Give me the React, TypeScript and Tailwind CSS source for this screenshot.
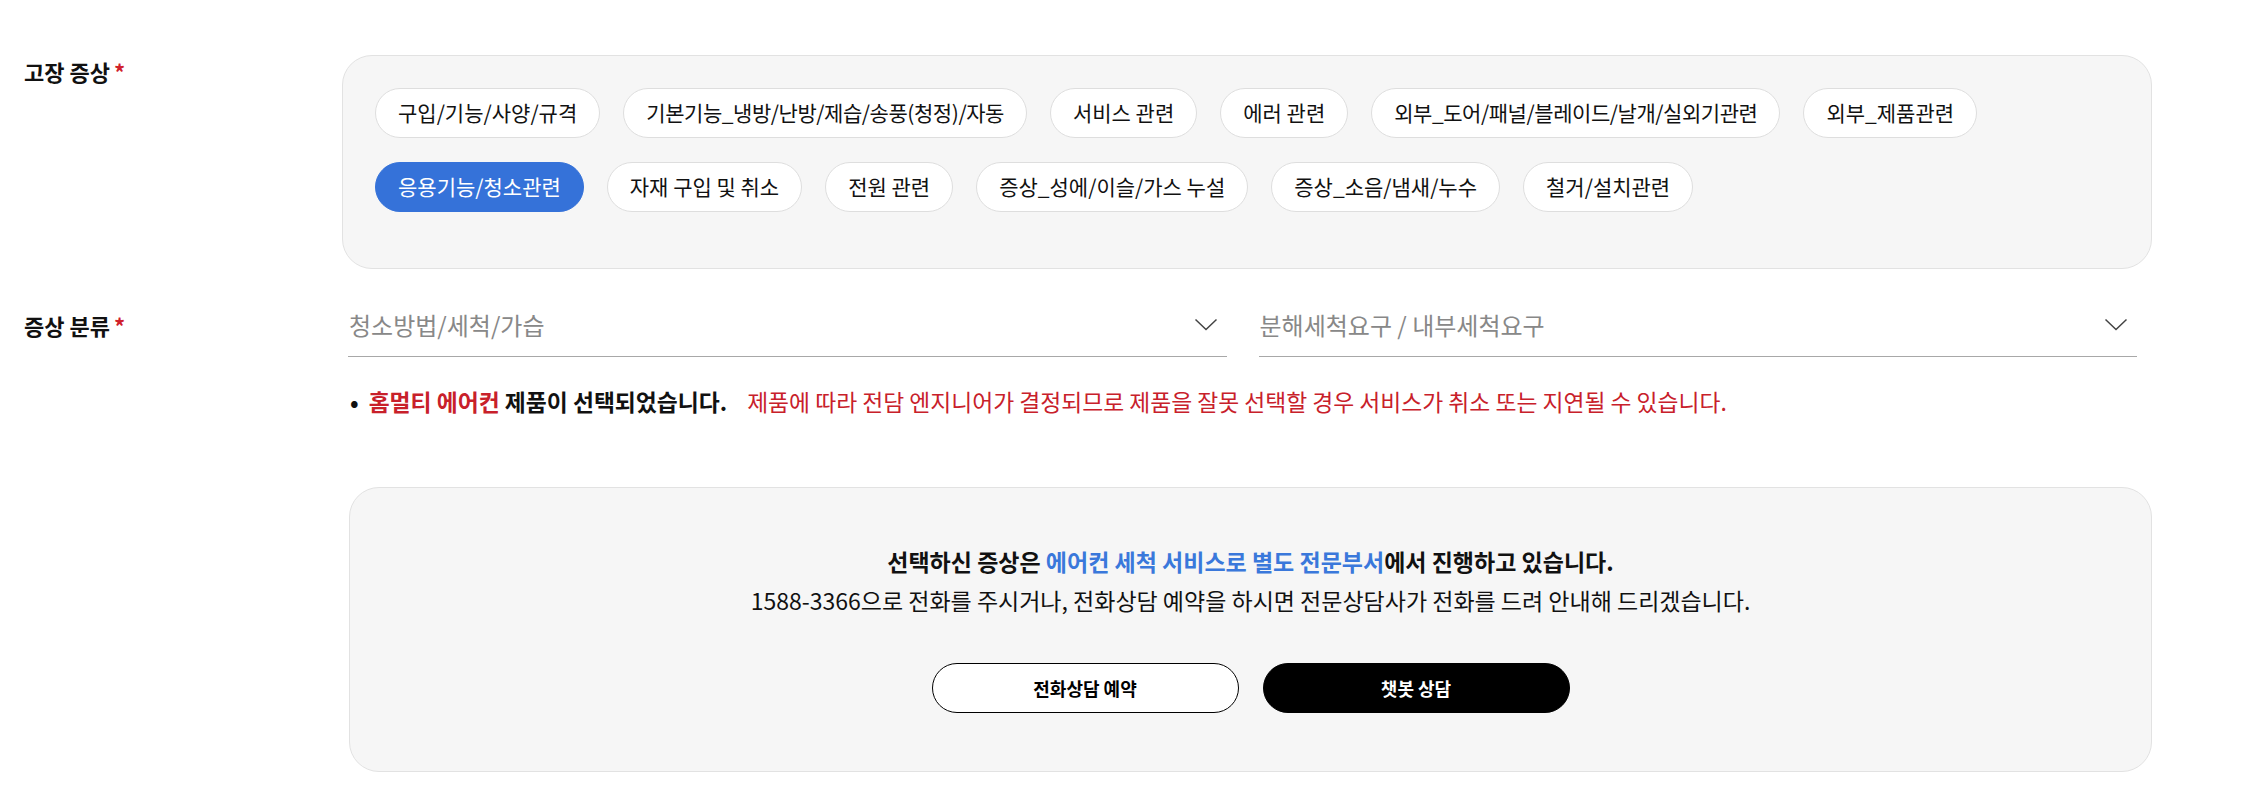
import React from "react";

const row1: { t: string; tight?: boolean }[] = [
  { t: "구입/기능/사양/규격" },
  { t: "기본기능_냉방/난방/제습/송풍(청정)/자동", tight: true },
  { t: "서비스 관련" },
  { t: "에러 관련" },
  { t: "외부_도어/패널/블레이드/날개/실외기관련", tight: true },
  { t: "외부_제품관련" },
];
const row2 = [
  "응용기능/청소관련",
  "자재 구입 및 취소",
  "전원 관련",
  "증상_성에/이슬/가스 누설",
  "증상_소음/냄새/누수",
  "철거/설치관련",
];

function Chip({ label, active, tight }: { label: string; active?: boolean; tight?: boolean }) {
  const base =
    "h-[50px] px-[22px] flex items-center rounded-full text-[21px] whitespace-nowrap border " +
    (tight ? "tracking-[-0.45px] " : "");
  return (
    <div
      className={
        active
          ? base + "bg-[#3572d9] border-[#3572d9] text-white"
          : base + "bg-white border-[#dedede] text-[#111]"
      }
    >
      {label}
    </div>
  );
}

function Chevron() {
  return (
    <svg width="24" height="13" viewBox="0 0 24 13" className="shrink-0">
      <polyline points="1.5,1.5 12,11.5 22.5,1.5" fill="none" stroke="#444" strokeWidth="1.5" />
    </svg>
  );
}

function Dropdown({ text }: { text: string }) {
  return (
    <div className="flex-1 h-[64px] border-b border-[#a8a8a8] flex items-center justify-between pr-[9px] pl-px">
      <span className="text-[24px] text-[#888]">{text}</span>
      <Chevron />
    </div>
  );
}

export default function App() {
  return (
    <div className="w-[2254px] h-[796px] bg-white pl-6 pr-[102px] pt-[55px] text-[#111] font-['Noto_Sans_CJK_KR','Noto_Sans_CJK_SC',sans-serif] overflow-hidden">
      {/* 고장 증상 */}
      <div className="flex">
        <div className="w-[318px] shrink-0 text-[22px] font-bold leading-[32px]">
          고장 증상<span className="text-[#d0202b] ml-1">*</span>
        </div>
        <div className="flex-1 rounded-[30px] border border-[#e2e2e2] bg-[#f6f6f6] pl-8 pt-8 pb-[56px] pr-8 flex flex-col gap-6">
          <div className="flex gap-[23px]">
            {row1.map((c) => (
              <Chip key={c.t} label={c.t} tight={c.tight} />
            ))}
          </div>
          <div className="flex gap-[23px]">
            {row2.map((c, i) => (
              <Chip key={c} label={c} active={i === 0} />
            ))}
          </div>
        </div>
      </div>

      {/* 증상 분류 */}
      <div className="flex mt-6">
        <div className="w-[324px] shrink-0 h-[64px] flex items-center text-[22px] font-bold">
          증상 분류<span className="text-[#d0202b] ml-1">*</span>
        </div>
        <div className="flex-1 flex gap-8 pr-[15px]">
          <Dropdown text="청소방법/세척/가습" />
          <Dropdown text="분해세척요구 / 내부세척요구" />
        </div>
      </div>

      {/* notice */}
      <div className="ml-[326px] mt-[30px] flex items-center text-[22.8px] leading-[30px] whitespace-nowrap">
        <span className="mr-[10px] font-bold">•</span>
        <span className="font-bold text-[#c8202a]">홈멀티 에어컨</span>
        <span className="font-bold">&nbsp;제품이 선택되었습니다.</span>
        <span className="ml-[20px] text-[#c8202a]">
          제품에 따라 전담 엔지니어가 결정되므로 제품을 잘못 선택할 경우 서비스가 취소 또는 지연될 수 있습니다.
        </span>
      </div>

      {/* info box */}
      <div className="ml-[325px] mt-[70px] h-[285px] rounded-[30px] border border-[#e2e2e2] bg-[#f6f6f6] pt-[54px] flex flex-col items-center">
        <div className="text-[23px] leading-[39px] font-bold whitespace-nowrap">
          선택하신 증상은 <span className="text-[#3a78db]">에어컨 세척 서비스로 별도 전문부서</span>에서 진행하고 있습니다.
        </div>
        <div className="text-[23px] leading-[39px] whitespace-nowrap">
          1588-3366으로 전화를 주시거나, 전화상담 예약을 하시면 전문상담사가 전화를 드려 안내해 드리겠습니다.
        </div>
        <div className="flex gap-6 mt-[43px]">
          <button className="w-[307px] h-[50px] rounded-full border border-black bg-white text-[18px] font-bold text-black">
            전화상담 예약
          </button>
          <button className="w-[307px] h-[50px] rounded-full border border-black bg-black text-[18px] font-bold text-white">
            챗봇 상담
          </button>
        </div>
      </div>
    </div>
  );
}
